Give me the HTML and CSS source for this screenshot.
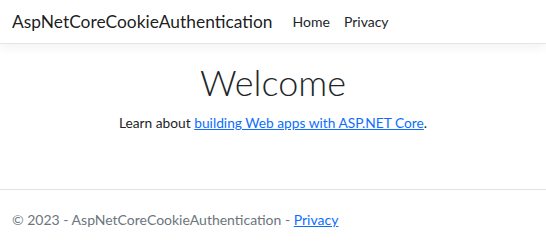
FILE: index.html
```html
<!DOCTYPE html>
<html lang="en">
<head>
  <meta charset="UTF-8">
  <title>Home Page - AspNetCoreCookieAuthentication</title>
  <link rel="stylesheet" href="styles.css">
</head>
<body>
  <header class="navbar">
    <a class="navbar-brand" href="#">AspNetCoreCookieAuthentication</a>
    <nav class="nav">
      <a class="nav-link" href="#">Home</a>
      <a class="nav-link" href="#">Privacy</a>
    </nav>
  </header>

  <main class="content">
    <h1 class="display">Welcome</h1>
    <p>Learn about <a href="#">building Web apps with ASP.NET Core</a>.</p>
  </main>

  <footer class="footer">
    &copy; 2023 - AspNetCoreCookieAuthentication - <a href="#">Privacy</a>
  </footer>
</body>
</html>
```

FILE: styles.css
```css
body {
  margin: 0;
  font-family: "Segoe UI", Lato, sans-serif;
  font-size: 14px;
  color: #212529;
  background: #fff;
}
a {
  color: #0d6efd;
}
.navbar {
  display: flex;
  align-items: center;
  height: 43px;
  padding: 0 12px;
  border-bottom: 1px solid #e5e5e5;
  box-shadow: 0 4px 10px rgba(0,0,0,0.05);
}
.navbar-brand {
  font-size: 17.4px;
  color: rgba(0,0,0,0.9);
  text-decoration: none;
  margin-right: 20px;
}
.nav {
  display: flex;
  gap: 14px;
}
.nav-link {
  color: #212529;
  text-decoration: none;
}
.content {
  text-align: center;
  padding-top: 17px;
  height: 128px;
}
.display {
  font-size: 36px;
  font-weight: 300;
  margin: 0 0 10px;
  line-height: 1.2;
}
.content p {
  margin: 0;
  font-size: 13.75px;
}
.footer {
  border-top: 1px solid #dee2e6;
  line-height: 60px;
  padding: 0 12px;
  color: #6c757d;
}
```
